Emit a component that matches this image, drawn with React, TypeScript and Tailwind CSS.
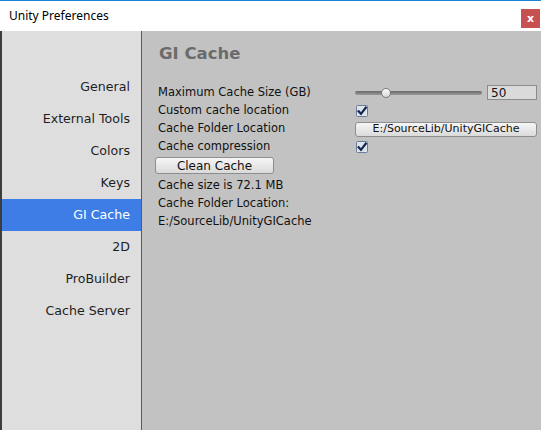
import React from "react";

const Check = () => (
  <svg width="12" height="12" viewBox="0 0 12 12" className="block">
    <rect x="0.5" y="0.5" width="11" height="11" rx="1" fill="#dfe4ec" stroke="#6b7c98" />
    <path d="M2.6 6.2 L5 8.8 L9.8 2.6" fill="none" stroke="#13264d" strokeWidth="2.2" strokeLinecap="square" />
  </svg>
);

const items = ["General", "External Tools", "Colors", "Keys", "GI Cache", "2D", "ProBuilder", "Cache Server"];

export default function App() {
  const font = { fontFamily: '"DejaVu Sans", Verdana, sans-serif' };
  return (
    <div className="w-[541px] h-[430px] flex flex-col overflow-hidden bg-white" style={font}>
      <div className="h-px bg-[#1883d7]" />
      <div className="h-[30px] bg-white flex items-center pl-[9px] relative">
        <span className="text-[12px] text-black" style={{ fontFamily: '"Noto Sans", "Open Sans", sans-serif' }}>
          Unity Preferences
        </span>
        <div className="ml-auto mr-[1px] mt-[5px] w-[19px] h-[19px] bg-[#c75050] flex items-center justify-center text-white text-[11px] font-bold leading-none">
          x
        </div>
      </div>
      <div className="flex-1 flex">
        <div className="w-[2px] bg-[#3b3d3f]" />
        <div className="w-[139px] bg-[#dedede] pt-[40px] flex flex-col">
          {items.map((it) => (
            <div
              key={it}
              className={
                "h-[32px] flex items-center justify-end pr-[11px] pt-[1px] text-[12.6px] " +
                (it === "GI Cache" ? "bg-[#3e7de5] text-white" : "text-[#1e1e1e]")
              }
            >
              {it}
            </div>
          ))}
        </div>
        <div className="w-px bg-[#5a5a5a]" />
        <div className="flex-1 bg-[#c2c2c2] pl-[16px] pr-[4px] text-[11.5px] text-[#111]">
          <div className="mt-[13px] h-[20px] leading-[20px] pl-[1px] text-[16.5px] font-bold text-[#6b6b6b]">GI Cache</div>
          <div className="mt-[19px] grid grid-cols-[197px_1fr]">
            <div className="h-[19px] flex items-center">Maximum Cache Size (GB)</div>
            <div className="h-[19px] flex items-center">
              <div className="relative w-[127px] h-[4px] rounded-full bg-gradient-to-b from-[#6a6a6a] to-[#9a9a9a]">
                <div className="absolute left-[26px] top-[-3px] w-[10px] h-[10px] rounded-full border border-[#7a7a7a] bg-gradient-to-b from-[#fafafa] to-[#d8d8d8]" />
              </div>
              <div className="ml-[5px] w-[50px] h-[15px] border border-[#8c8c8c] bg-[#dadada] flex items-center pl-[3px] text-[12px]">
                50
              </div>
            </div>
            <div className="h-[18px] flex items-center">Custom cache location</div>
            <div className="h-[18px] flex items-center pl-[1px]">
              <Check />
            </div>
            <div className="h-[18px] flex items-center">Cache Folder Location</div>
            <div className="h-[18px] flex items-center">
              <div className="w-[182px] h-[15px] rounded-[3px] border border-[#8e8e8e] bg-gradient-to-b from-[#f6f6f6] to-[#dadada] flex items-center justify-center text-[11px]">
                E:/SourceLib/UnityGICache
              </div>
            </div>
            <div className="h-[18px] flex items-center">Cache compression</div>
            <div className="h-[18px] flex items-center pl-[1px]">
              <Check />
            </div>
          </div>
          <div className="mt-[1px] -ml-[3px] w-[119px] h-[17px] rounded-[3px] border border-[#8e8e8e] bg-gradient-to-b from-[#f6f6f6] to-[#dadada] flex items-center justify-center text-[12px]">
            Clean Cache
          </div>
          <div className="mt-[3px] h-[18px] flex items-center">Cache size is 72.1 MB</div>
          <div className="h-[18px] flex items-center">Cache Folder Location:</div>
          <div className="h-[18px] flex items-center">E:/SourceLib/UnityGICache</div>
        </div>
      </div>
    </div>
  );
}
